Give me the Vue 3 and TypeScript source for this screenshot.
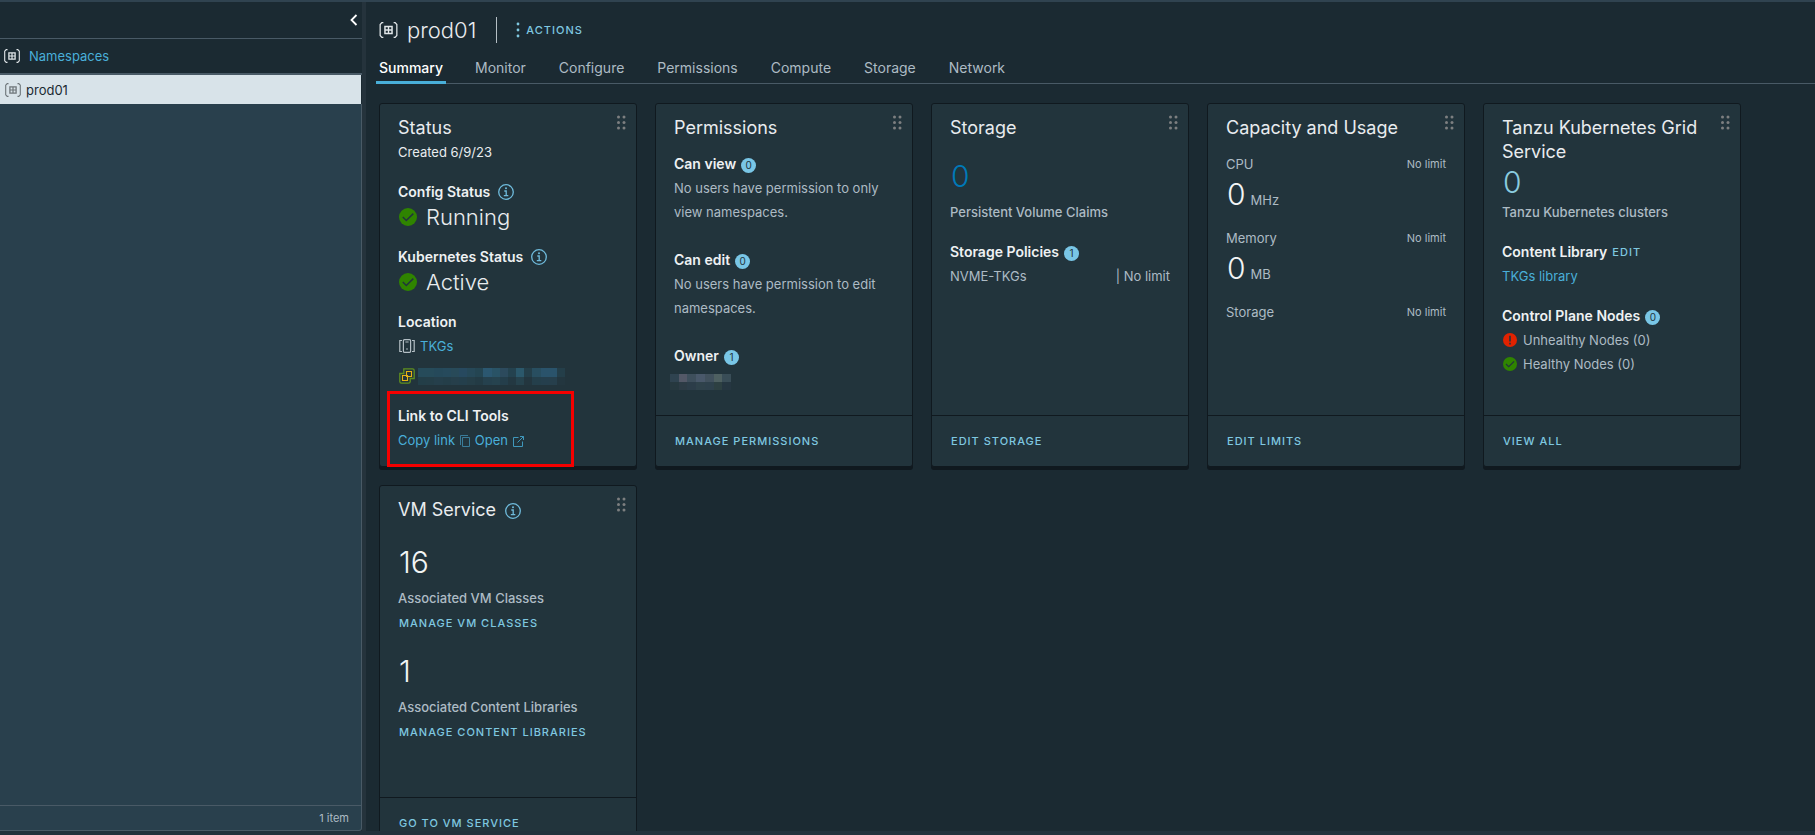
<script setup lang="ts">
const tabs: string[] = ['Summary', 'Monitor', 'Configure', 'Permissions', 'Compute', 'Storage', 'Network']

interface Usage { label: string; value?: string; unit?: string }
const usages: Usage[] = [
  { label: 'CPU', value: '0', unit: 'MHz' },
  { label: 'Memory', value: '0', unit: 'MB' },
  { label: 'Storage' },
]

interface VmStat { count: number; label: string; action: string }
const vmStats: VmStat[] = [
  { count: 16, label: 'Associated VM Classes', action: 'Manage VM Classes' },
  { count: 1, label: 'Associated Content Libraries', action: 'Manage Content Libraries' },
]

const hostTop = ['#264b5a', '#264b5a', '#25495a', '#264a5c', '#284a59', '#27495f', '#264858', '#244552', '#2b5770', '#295366', '#2c4a5d', '#24424f', '#2b586b', '#243f4a', '#284e60', '#2a536b', '#2a536b', '#243e49']
const hostBottom = ['#233e48', '#243e48', '#253f4b', '#243e49', '#263f4b', '#243f4c', '#253e48', '#233b45', '#25414e', '#26434f', '#243e4b', '#233842', '#26424d', '#23363f', '#243f4b', '#253f4d', '#263f4c', '#23363f']
const ownerTop = ['#2f4350', '#535867', '#3e4f5c', '#49586a', '#41515d', '#4e6061', '#394d57']
const ownerBottom = ['#26383f', '#2c3b45', '#2c3d49', '#2f424b', '#2e414c', '#2d4042', '#253641']
</script>

<template>
  <div class="app">
    <div class="workspace">
      <aside class="sidebar">
        <div class="sidebar-head">
          <button class="collapse" aria-label="Collapse panel">
            <svg width="8" height="12" viewBox="0 0 8 12"><path d="M6.5 1 1.5 6l5 5" fill="none" stroke="#fff" stroke-width="1.8" /></svg>
          </button>
        </div>
        <div class="scope">
          <svg class="ns-icon" width="16" height="14" viewBox="0 0 16 14"><use href="#ns" /></svg>
          <a href="#namespaces">Namespaces</a>
        </div>
        <a class="tree-item" href="#prod01">
          <svg class="ns-icon" width="16" height="14" viewBox="0 0 16 14"><use href="#ns" /></svg>
          <span>prod01</span>
        </a>
        <div class="tree-space"></div>
        <footer class="tree-foot">1 item</footer>
      </aside>

      <main class="main">
        <header class="title-bar">
          <svg class="ns-icon" width="19" height="16" viewBox="0 0 16 14"><use href="#ns" /></svg>
          <h1>prod01</h1>
          <span class="divider"></span>
          <button class="text-btn actions">
            <svg width="4" height="16" viewBox="0 0 4 16" fill="currentColor"><circle cx="2" cy="2" r="1.4" /><circle cx="2" cy="8" r="1.4" /><circle cx="2" cy="14" r="1.4" /></svg>
            Actions
          </button>
        </header>

        <nav class="tabs">
          <button v-for="(tab, i) in tabs" :key="tab" class="tab" :class="{ active: i === 0 }">{{ tab }}</button>
        </nav>

        <div class="cards">
          <section class="card">
            <svg class="grip" width="9" height="15"><use href="#grip" /></svg>
            <div class="body">
              <h2>Status</h2>
              <p class="bright">Created 6/9/23</p>
              <h3 class="gap-16">Config Status <svg class="info" width="16" height="16" viewBox="0 0 16 16"><use href="#info" /></svg></h3>
              <p class="state"><svg width="18" height="18" viewBox="0 0 18 18"><use href="#ok" /></svg>Running</p>
              <h3 class="gap-16">Kubernetes Status <svg class="info" width="16" height="16" viewBox="0 0 16 16"><use href="#info" /></svg></h3>
              <p class="state"><svg width="18" height="18" viewBox="0 0 18 18"><use href="#ok" /></svg>Active</p>
              <h3 class="gap-16">Location</h3>
              <p class="place">
                <svg width="16" height="14" viewBox="0 0 16 14" fill="none" stroke="#b3bec4" stroke-width="1.2"><path d="M3 1.5H.8v11H3M13 1.5h2.2v11H13" /><rect x="4.4" y=".7" width="7.2" height="12.6" rx="1" /><path d="M6.4 3h3.2M8 9.2v1.6" /></svg>
                <a href="#tkgs">TKGs</a>
              </p>
              <p class="host">
                <svg width="16" height="16" viewBox="0 0 16 16" fill="none"><path d="M5.5.8h8a1.7 1.7 0 0 1 1.7 1.7v8h-4v3a1.7 1.7 0 0 1-1.7 1.7h-7A1.7 1.7 0 0 1 .8 13.5v-8h4V.8z" stroke="#5f8f1f" stroke-width="1.3" /><path d="M7.5 3.5h5v5h-5zM3.5 7.500h5v5h-5z" stroke="#e5b314" stroke-width="1.1" /></svg>
                <svg width="147" height="17" viewBox="0 0 147 17" shape-rendering="crispEdges" aria-hidden="true">
                  <rect v-for="(c, i) in hostTop" :key="'a' + i" :x="Math.round(i * 147 / 18)" y="0" width="9" height="9" :fill="c" />
                  <rect v-for="(c, i) in hostBottom" :key="'b' + i" :x="Math.round(i * 147 / 18)" y="9" width="9" height="8" :fill="c" />
                </svg>
              </p>
              <h3 class="gap-16">Link to CLI Tools</h3>
              <p class="cli">
                <a href="#copy">Copy link <svg width="10" height="12" viewBox="0 0 10 12" fill="none" stroke="#3a7c99"><path d="M2.5 2.5h7v9h-7zM.5 10V.5H8" /></svg></a>
                <a href="#open">Open <svg width="11" height="11" viewBox="0 0 11 11" fill="none" stroke="#3f97bb"><path d="M5.5 1.5h-5v9h9v-5M7 .5h3.5V4M10.5.5l-6 6" /></svg></a>
              </p>
              <div class="highlight"></div>
            </div>
          </section>

          <section class="card">
            <svg class="grip" width="9" height="15"><use href="#grip" /></svg>
            <div class="body">
              <h2>Permissions</h2>
              <h3 class="gap-12">Can view <span class="badge">0</span></h3>
              <p>No users have permission to only view namespaces.</p>
              <h3 class="gap-24">Can edit <span class="badge">0</span></h3>
              <p>No users have permission to edit namespaces.</p>
              <h3 class="gap-24">Owner <span class="badge">1</span></h3>
              <svg class="owner" width="61" height="16" viewBox="0 0 61 16" shape-rendering="crispEdges" aria-hidden="true">
                <rect v-for="(c, i) in ownerTop" :key="'a' + i" :x="Math.round(i * 61 / 7)" y="0" width="9" height="8" :fill="c" />
                <rect v-for="(c, i) in ownerBottom" :key="'b' + i" :x="Math.round(i * 61 / 7)" y="8" width="9" height="8" :fill="c" />
              </svg>
            </div>
            <footer><button class="text-btn">Manage Permissions</button></footer>
          </section>

          <section class="card">
            <svg class="grip" width="9" height="15"><use href="#grip" /></svg>
            <div class="body">
              <h2>Storage</h2>
              <p class="big tall gap-12 blue">0</p>
              <p class="medium">Persistent Volume Claims</p>
              <h3 class="gap-16">Storage Policies <span class="badge">1</span></h3>
              <p class="split"><span>NVME-TKGs</span><span>| No limit</span></p>
            </div>
            <footer><button class="text-btn">Edit Storage</button></footer>
          </section>

          <section class="card">
            <svg class="grip" width="9" height="15"><use href="#grip" /></svg>
            <div class="body">
              <h2>Capacity and Usage</h2>
              <div v-for="u in usages" :key="u.label" class="usage">
                <p class="split"><span>{{ u.label }}</span><small>No limit</small></p>
                <p v-if="u.value" class="amount"><span class="big">{{ u.value }}</span><span>{{ u.unit }}</span></p>
              </div>
            </div>
            <footer><button class="text-btn">Edit Limits</button></footer>
          </section>

          <section class="card">
            <svg class="grip" width="9" height="15"><use href="#grip" /></svg>
            <div class="body">
              <h2>Tanzu Kubernetes Grid Service</h2>
              <p class="big sky">0</p>
              <p class="medium">Tanzu Kubernetes clusters</p>
              <h3 class="gap-16">Content Library <button class="text-btn">Edit</button></h3>
              <p><a href="#library">TKGs library</a></p>
              <h3 class="gap-16">Control Plane Nodes <span class="badge">0</span></h3>
              <p class="node"><svg width="14" height="14" viewBox="0 0 18 18"><circle cx="9" cy="9" r="9" fill="#e12200" /><path d="M9 3.5V11M9 12.5v2.2" stroke="#22343c" stroke-width="2" /></svg>Unhealthy Nodes (0)</p>
              <p class="node"><svg width="14" height="14" viewBox="0 0 18 18"><use href="#ok" /></svg>Healthy Nodes (0)</p>
            </div>
            <footer><button class="text-btn">View All</button></footer>
          </section>

          <section class="card">
            <svg class="grip" width="9" height="15"><use href="#grip" /></svg>
            <div class="body">
              <h2>VM Service <svg class="info" width="16" height="16" viewBox="0 0 16 16"><use href="#info" /></svg></h2>
              <div v-for="s in vmStats" :key="s.label" class="stat">
                <p class="big tall">{{ s.count }}</p>
                <p class="medium">{{ s.label }}</p>
                <button class="text-btn">{{ s.action }}</button>
              </div>
            </div>
            <footer><button class="text-btn">Go to VM Service</button></footer>
          </section>
        </div>
      </main>
    </div>

    <svg class="defs" width="0" height="0" aria-hidden="true">
      <defs>
        <g id="ns" fill="none" stroke="currentColor">
          <path d="M3.5.6H2.200L.7 2.200v9.600l1.500 1.600h1.300M12.500.6h1.300l1.500 1.600v9.600l-1.500 1.600h-1.300" stroke-width="1.1" />
          <path d="M4.900 3.900h6.200v6.200H4.900z" stroke-width="1.3" />
          <path d="M8 4v6M5 7h6" stroke-width="1.2" />
        </g>
        <g id="info" fill="none" stroke="#6fbbdc">
          <circle cx="8" cy="8" r="7.3" stroke-width="1.3" />
          <path d="M6.3 7h1.900v4.600M5.800 11.700h4.500" stroke-width="1.3" />
          <circle cx="8" cy="4.2" r="1" fill="#6fbbdc" stroke="none" />
        </g>
        <g id="ok">
          <circle cx="9" cy="9" r="9" fill="#2f8400" />
          <path d="m3.800 9 3.500 3.500 7-6.900" fill="none" stroke="#22343c" stroke-width="1.5" />
        </g>
        <g id="grip" fill="#7d7f80">
          <circle cx="1.5" cy="2" r="1.5" /><circle cx="7" cy="2" r="1.5" />
          <circle cx="1.5" cy="7.5" r="1.5" /><circle cx="7" cy="7.5" r="1.5" />
          <circle cx="1.5" cy="13" r="1.5" /><circle cx="7" cy="13" r="1.5" />
        </g>
      </defs>
    </svg>
  </div>
</template>

<style>
body { background: #1b2a32; }
</style>

<style scoped>
* { box-sizing: border-box; }
.app {
  height: 100vh;
  display: flex;
  flex-direction: column;
  border-top: 2px solid #304350;
  border-bottom: 4px solid #22313c;
  background: #1b2a32;
  color: #adbbc4;
  font: 400 13px/24px Inter, "Noto Sans", sans-serif;
  overflow: hidden;
}
.defs { position: absolute; }
h1, h2, h3, p { margin: 0; font-weight: 400; }
a { color: #49afd9; text-decoration: none; }
button { font: inherit; color: inherit; background: none; border: 0; padding: 0; }
svg { flex: none; }

.workspace { flex: 1; min-height: 0; display: flex; }
.sidebar {
  flex: none;
  width: 366px;
  display: flex;
  flex-direction: column;
  border-right: 4px solid #25333c;
}
.sidebar-head {
  height: 37px;
  display: flex;
  align-items: center;
  justify-content: flex-end;
  padding-right: 4px;
  border-bottom: 1px solid #495a66;
}
.collapse { display: flex; }
.scope {
  height: 36px;
  display: flex;
  align-items: center;
  gap: 9px;
  padding-left: 4px;
  border-bottom: 2px solid #495a66;
}
.ns-icon { color: #e2e7ea; }
.tree-item {
  height: 29px;
  display: flex;
  align-items: center;
  gap: 5px;
  padding-left: 5px;
  margin-right: 1px;
  background: #d8e3e9;
  color: #1b2a32;
}
.tree-item .ns-icon { color: #6d7579; }
.tree-space { flex: 1; background: #29404d; border-right: 1px solid #495a66; }
.tree-foot {
  height: 26px;
  padding-right: 12px;
  border: solid #495a66;
  border-width: 1px 1px 1px 0;
  border-radius: 0 0 3px 0;
  background: #29404d;
  text-align: right;
  font-size: 11px;
}

.main { flex: 1; min-width: 0; display: flex; flex-direction: column; padding-left: 10px; }
.title-bar { display: flex; align-items: center; height: 52px; padding: 4px 0 0 3px; }
.title-bar h1 { margin-left: 9px; font-size: 22px; font-weight: 300; color: #e9ecef; }
.divider { width: 1px; height: 26px; margin: 0 19px 0 20px; background: #b5bfc5; }
.text-btn {
  color: #7fc8e0;
  font-size: 11px;
  font-weight: 500;
  line-height: 24px;
  letter-spacing: 1px;
  text-transform: uppercase;
}
.actions { display: flex; align-items: center; gap: 6px; }
.tabs { display: flex; gap: 25px; height: 30px; border-bottom: 1px solid #495a66; }
.tab { height: 30px; padding: 0 4px 2px; font-size: 14px; }
.tab.active { color: #fff; font-weight: 500; border-bottom: 3px solid #49afd9; padding: 0 3px; }

.cards {
  flex: 1;
  min-height: 0;
  display: grid;
  grid-template-columns: repeat(auto-fill, 258px);
  grid-auto-rows: 364px;
  gap: 18px;
  padding: 19px 3px 0;
  overflow: auto;
  scrollbar-width: none;
}
.card {
  position: relative;
  display: flex;
  flex-direction: column;
  border: 1px solid #10191f;
  border-radius: 3px;
  background: #22343c;
  box-shadow: 0 3px 0 #10191f;
}
.grip { position: absolute; top: 11px; right: 10px; }
.body { flex: 1; padding: 12px 18px 0; }
.card footer { height: 51px; padding: 13px 19px; border-top: 1px solid #10191f; line-height: 24px; display: flex; }
h2 { font-size: 18px; color: #e9ecef; padding-right: 20px; }
h3 { display: flex; align-items: center; gap: 5px; font-size: 14px; font-weight: 600; color: #eef1f3; }
h3 .info { margin-left: 3px; }
h2 .info { margin-left: 4px; vertical-align: -3px; }
.bright { color: #e9ecef; }
.gap-12 { margin-top: 12px; }
.gap-16 { margin-top: 16px; }
.gap-24 { margin-top: 24px; }
.state { display: flex; align-items: center; gap: 9px; height: 25px; padding-left: 1px; font-size: 22px; font-weight: 300; color: #e9ecef; }
.place { display: flex; align-items: center; gap: 5px; padding-left: 1px; }
.host { display: flex; align-items: center; gap: 3px; margin-top: 6px; height: 24px; padding-left: 1px; }
.cli { display: flex; gap: 5px; }
.cli svg { margin-left: 1px; vertical-align: -2px; }
.highlight { position: absolute; left: 7px; top: 287px; width: 187px; height: 76px; border: 3px solid #f50000; }
.badge {
  width: 15px;
  height: 15px;
  margin-top: 2px;
  border-radius: 50%;
  background: #79c6e6;
  color: #22343c;
  font-size: 10px;
  font-weight: 400;
  line-height: 15px;
  text-align: center;
}
.owner { display: block; margin: 6px 0 0 -4px; }
.big { padding-left: 1px; font-size: 30px; font-weight: 300; line-height: 36px; color: #f2f4f5; }
.tall { line-height: 48px; }
.blue { color: #0079b8; }
.sky { color: #89cbdf; }
.medium { font-weight: 500; }
.split { display: flex; justify-content: space-between; }
.split small { font-size: 11px; }
.usage { margin-top: 12px; }
.usage + .usage { margin-top: 14px; }
.amount { display: flex; align-items: baseline; gap: 5px; height: 36px; }
.node { display: flex; align-items: center; gap: 6px; padding-left: 1px; }
.stat { margin-top: 16px; }
.stat + .stat { margin-top: 12px; }
.stat .text-btn { display: block; margin-top: 1px; padding-left: 1px; }
</style>
